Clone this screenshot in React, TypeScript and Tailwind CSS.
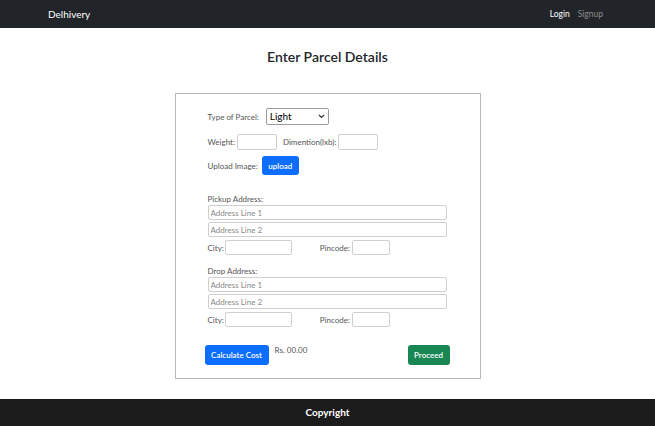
import React from "react";

const font = { fontFamily: "Lato, 'Open Sans', sans-serif" };

function Field({ ph }: { ph?: string }) {
  return (
    <input
      placeholder={ph}
      className="block w-full h-full border border-[#cfcfcf] rounded-[2px] px-[2px] text-[8px] leading-[10px] text-[#333] placeholder:text-[#8a8a8a] outline-none bg-white"
    />
  );
}

function AddressBlock({ title }: { title: string }) {
  return (
    <div className="flex flex-col">
      <div className="h-[10px] leading-[10px] text-[8px] text-[#555]">{title}</div>
      <div className="h-[15px] mt-[1px] w-[239px] flex">
        <Field ph="Address Line 1" />
      </div>
      <div className="h-[15px] mt-[2px] w-[239px] flex">
        <Field ph="Address Line 2" />
      </div>
      <div className="h-[15px] mt-[3px] flex items-center text-[8px] text-[#555]">
        <span>City:</span>
        <div className="h-full ml-[1px] w-[67px] flex">
          <Field />
        </div>
        <span className="ml-[28px]">Pincode:</span>
        <div className="h-full ml-[2px] w-[38px] flex">
          <Field />
        </div>
      </div>
    </div>
  );
}

export default function App() {
  return (
    <div className="w-[655px] h-[426px] bg-white flex flex-col" style={font}>
      <nav className="h-[28px] bg-[#212529] flex items-center justify-between pl-[48px] pr-[52px]">
        <span className="text-white text-[10px]">Delhivery</span>
        <div className="flex items-center gap-[8px] text-[8.5px]">
          <span className="text-white">Login</span>
          <span className="text-[#8c8e91]">Signup</span>
        </div>
      </nav>
      <div className="flex-1 flex flex-col items-center">
        <h1 className="mt-[19px] h-[20px] leading-[20px] text-[14px] font-semibold text-[#212529]">
          Enter Parcel Details
        </h1>
        <div className="mt-[26px] w-[306px] h-[286px] border border-[#b9b9b9] pt-[14px] pl-[32px] flex flex-col">
          <div className="h-[17px] flex items-center text-[8px] text-[#555]">
            <span>Type of Parcel:</span>
            <div className="ml-[7px] h-full w-[63px] border border-[#9a9a9a] rounded-[2px] flex items-center justify-between px-[3px]">
              <span className="text-[10px] text-black">Light</span>
              <svg width="7" height="5" viewBox="0 0 7 5">
                <path d="M1 1l2.5 2.5L6 1" stroke="#333" strokeWidth="1.2" fill="none" />
              </svg>
            </div>
          </div>
          <div className="h-[16px] mt-[9px] flex items-center text-[8px] text-[#555]">
            <span>Weight:</span>
            <div className="h-full ml-[2px] w-[40px] flex">
              <Field />
            </div>
            <span className="ml-[6px]">Dimention(lxb):</span>
            <div className="h-full ml-[2px] w-[40px] flex">
              <Field />
            </div>
          </div>
          <div className="h-[19px] mt-[6px] flex items-center text-[8px] text-[#555]">
            <span>Upload Image:</span>
            <button className="ml-[4px] h-full w-[37px] bg-[#0d6efd] rounded-[3px] text-white text-[8px] font-semibold">
              upload
            </button>
          </div>
          <div className="mt-[19px]">
            <AddressBlock title="Pickup Address:" />
          </div>
          <div className="mt-[11px]">
            <AddressBlock title="Drop Address:" />
          </div>
          <div className="mt-[18px] -ml-[3px] w-[245px] flex items-start">
            <button className="h-[20px] w-[64px] bg-[#0d6efd] rounded-[3px] text-white text-[8px] font-semibold">
              Calculate Cost
            </button>
            <span className="ml-[6px] text-[8px] text-[#555] leading-[10px]">Rs. 00.00</span>
            <button className="ml-auto h-[20px] w-[42px] bg-[#198754] rounded-[3px] text-white text-[8px] font-semibold">
              Proceed
            </button>
          </div>
        </div>
      </div>
      <footer className="h-[27px] bg-[#1b1b1b] flex items-center justify-center">
        <span className="text-white text-[10px] font-bold">Copyright</span>
      </footer>
    </div>
  );
}
